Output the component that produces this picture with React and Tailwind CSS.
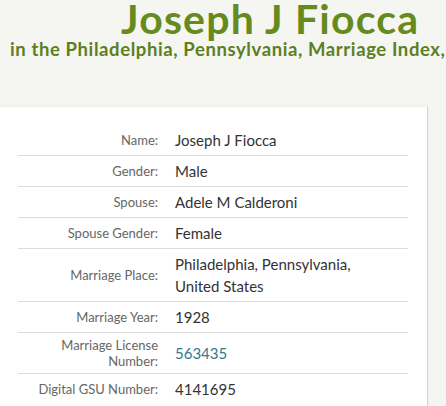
export default function App() {
  const rows = [
    { label: "Name:", value: "Joseph J Fiocca" },
    { label: "Gender:", value: "Male" },
    { label: "Spouse:", value: "Adele M Calderoni" },
    { label: "Spouse Gender:", value: "Female" },
    { label: "Marriage Place:", value: "Philadelphia, Pennsylvania, United States" },
    { label: "Marriage Year:", value: "1928" },
    { label: "Marriage License Number:", value: "563435", link: true },
    { label: "Digital GSU Number:", value: "4141695" },
  ]

  return (
    <div className="h-[406px] w-[446px] overflow-hidden bg-[#f5f5f1] font-['Lato',sans-serif]">
      {/* Header */}
      <div className="text-[#658a1d]">
        <h1 className="pl-[121px] text-[41px] font-bold leading-[38px] tracking-[1.2px] whitespace-nowrap">
          Joseph J Fiocca
        </h1>
        <h2 className="pl-[10px] text-[18.5px] font-bold leading-[22px] tracking-[0.6px] whitespace-nowrap text-[#5d7f22]">
          in the Philadelphia, Pennsylvania, Marriage Index,
        </h2>
      </div>

      {/* Record card */}
      <div className="mt-[47px] w-[428px] bg-white border-r border-[#d4d4d4] shadow-[0_-1px_2px_rgba(0,0,0,0.04)] pt-[18px] pb-4">
        <div className="ml-[18px] w-[390px]">
          {rows.map((row, i) => (
            <div
              key={row.label}
              className={`flex items-center py-1 ${i < rows.length - 1 ? "border-b border-[#dcdcdc]" : ""}`}
            >
              <div className="w-[140px] shrink-0 text-right text-[13px] leading-4 text-[#666]">
                {row.label}
              </div>
              <div
                className={`ml-[17px] w-[212px] text-[15px] leading-[22px] ${row.link ? "text-[#2f7a8c]" : "text-[#333]"}`}
              >
                {row.value}
              </div>
            </div>
          ))}
        </div>
      </div>
    </div>
  )
}
